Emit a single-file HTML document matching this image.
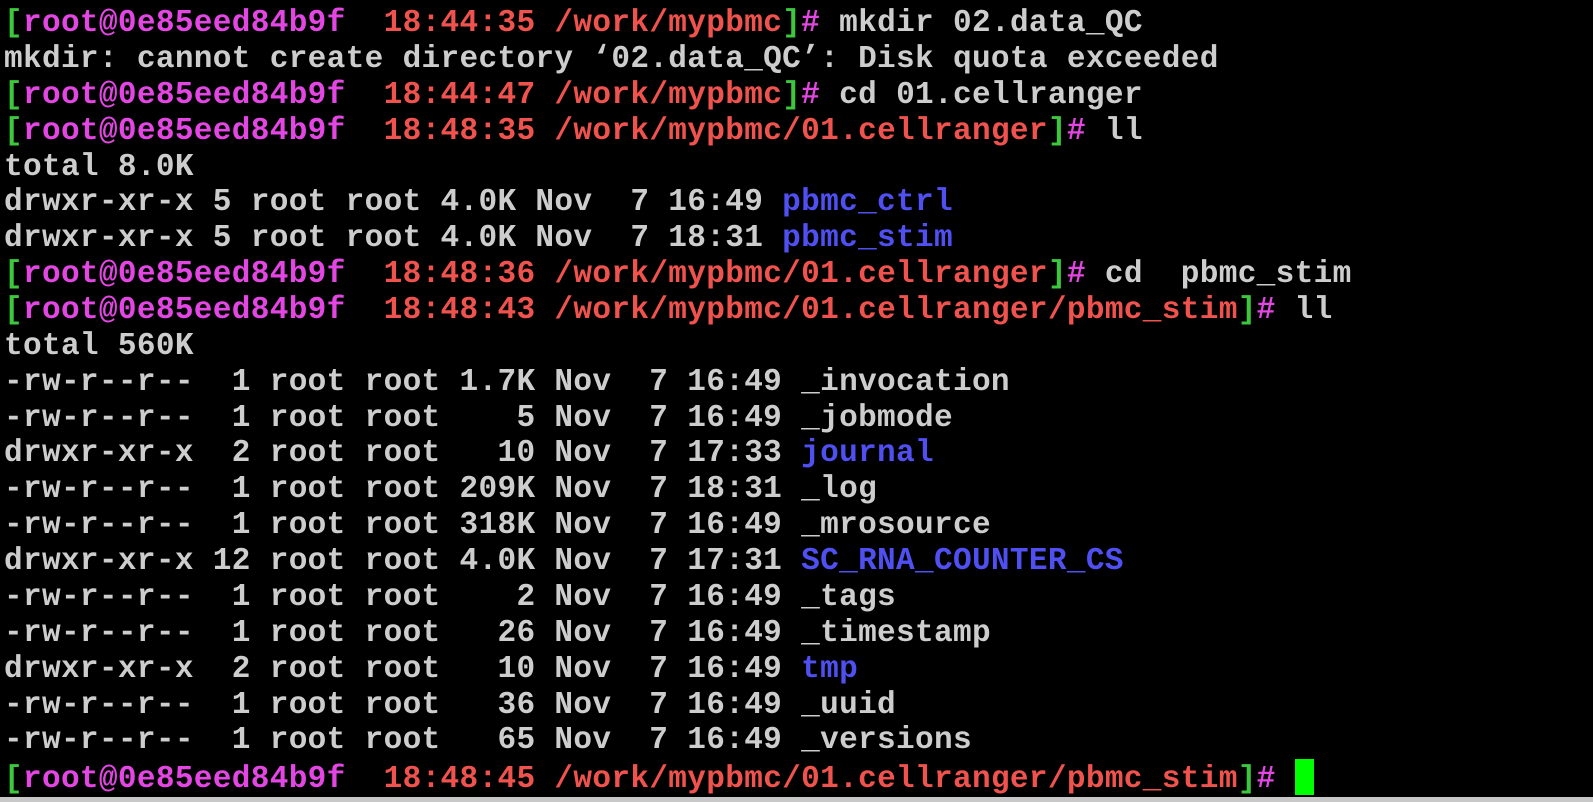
<!DOCTYPE html>
<html><head><meta charset="utf-8"><style>
html,body{margin:0;padding:0;background:#000;width:1593px;height:802px;overflow:hidden}
.l{position:absolute;left:4px;margin:0;font-family:"Liberation Mono","Courier New",monospace;font-weight:bold;font-size:31.1px;line-height:36px;letter-spacing:0.32px;color:#cdcdcd;white-space:pre}
.g{color:#3cc83c}.m{color:#e346e3}.r{color:#f0524e}.b{color:#4f4ff2}
.cur{display:inline-block;width:19px;height:36px;background:#00ff00;vertical-align:-8px}
.bar{position:absolute;left:0;top:797px;width:1593px;height:5px;background:#c8c8c8}
</style></head><body>
<div class="l" style="top:6px"><span class="g">[</span><span class="m">root@0e85eed84b9f</span>  <span class="r">18:44:35 /work/mypbmc</span><span class="g">]</span><span class="m">#</span> mkdir 02.data_QC</div>
<div class="l" style="top:41.9px">mkdir: cannot create directory ‘02.data_QC’: Disk quota exceeded</div>
<div class="l" style="top:77.7px"><span class="g">[</span><span class="m">root@0e85eed84b9f</span>  <span class="r">18:44:47 /work/mypbmc</span><span class="g">]</span><span class="m">#</span> cd 01.cellranger</div>
<div class="l" style="top:113.6px"><span class="g">[</span><span class="m">root@0e85eed84b9f</span>  <span class="r">18:48:35 /work/mypbmc/01.cellranger</span><span class="g">]</span><span class="m">#</span> ll</div>
<div class="l" style="top:149.5px">total 8.0K</div>
<div class="l" style="top:185.4px">drwxr-xr-x 5 root root 4.0K Nov  7 16:49 <span class="b">pbmc_ctrl</span></div>
<div class="l" style="top:221.2px">drwxr-xr-x 5 root root 4.0K Nov  7 18:31 <span class="b">pbmc_stim</span></div>
<div class="l" style="top:257.1px"><span class="g">[</span><span class="m">root@0e85eed84b9f</span>  <span class="r">18:48:36 /work/mypbmc/01.cellranger</span><span class="g">]</span><span class="m">#</span> cd  pbmc_stim</div>
<div class="l" style="top:293px"><span class="g">[</span><span class="m">root@0e85eed84b9f</span>  <span class="r">18:48:43 /work/mypbmc/01.cellranger/pbmc_stim</span><span class="g">]</span><span class="m">#</span> ll</div>
<div class="l" style="top:328.8px">total 560K</div>
<div class="l" style="top:364.7px">-rw-r--r--  1 root root 1.7K Nov  7 16:49 _invocation</div>
<div class="l" style="top:400.6px">-rw-r--r--  1 root root    5 Nov  7 16:49 _jobmode</div>
<div class="l" style="top:436.4px">drwxr-xr-x  2 root root   10 Nov  7 17:33 <span class="b">journal</span></div>
<div class="l" style="top:472.3px">-rw-r--r--  1 root root 209K Nov  7 18:31 _log</div>
<div class="l" style="top:508.2px">-rw-r--r--  1 root root 318K Nov  7 16:49 _mrosource</div>
<div class="l" style="top:544px">drwxr-xr-x 12 root root 4.0K Nov  7 17:31 <span class="b">SC_RNA_COUNTER_CS</span></div>
<div class="l" style="top:579.9px">-rw-r--r--  1 root root    2 Nov  7 16:49 _tags</div>
<div class="l" style="top:615.8px">-rw-r--r--  1 root root   26 Nov  7 16:49 _timestamp</div>
<div class="l" style="top:651.6px">drwxr-xr-x  2 root root   10 Nov  7 16:49 <span class="b">tmp</span></div>
<div class="l" style="top:687.5px">-rw-r--r--  1 root root   36 Nov  7 16:49 _uuid</div>
<div class="l" style="top:723.4px">-rw-r--r--  1 root root   65 Nov  7 16:49 _versions</div>
<div class="l" style="top:759.3px"><span class="g">[</span><span class="m">root@0e85eed84b9f</span>  <span class="r">18:48:45 /work/mypbmc/01.cellranger/pbmc_stim</span><span class="g">]</span><span class="m">#</span> <span class="cur"></span></div>
<div class="bar"></div>
</body></html>
